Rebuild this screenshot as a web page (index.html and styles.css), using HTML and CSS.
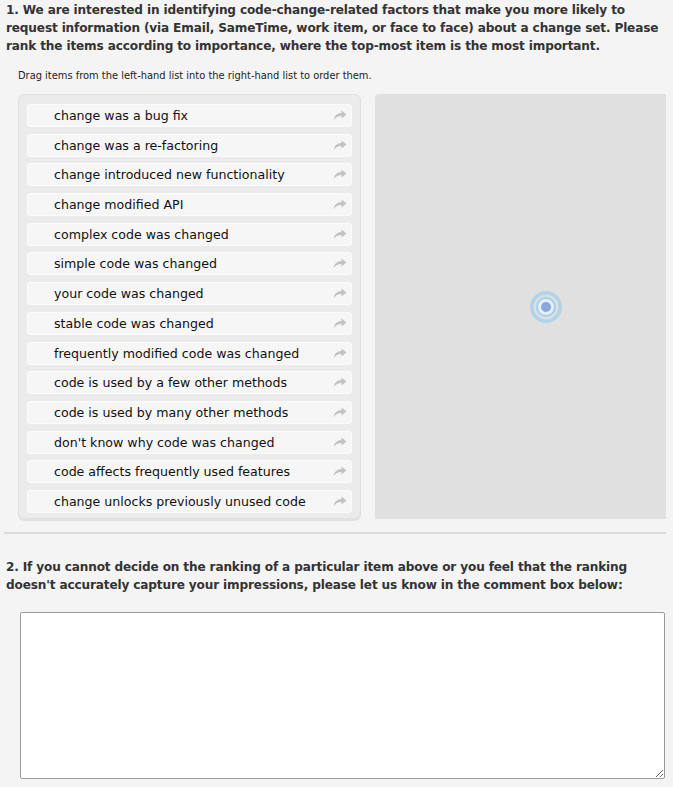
FILE: index.html
```html
<!DOCTYPE html>
<html>
<head>
<meta charset="utf-8">
<link rel="stylesheet" href="styles.css">
</head>
<body>
<div class="page">
  <p class="question">1. We are interested in identifying code-change-related factors that make you more likely to request information (via Email, SameTime, work item, or face to face) about a change set. Please rank the items according to importance, where the top-most item is the most important.</p>
  <p class="hint">Drag items from the left-hand list into the right-hand list to order them.</p>
  <div class="rank">
    <ul class="source">
      <li class="item"><span>change was a bug fix</span><svg class="arrow" viewBox="0 0 14 11"><path d="M8.5 0.5 L13.5 4.5 L8.5 8.5 V6 C5 6 2.5 7 0.8 10.2 C1.2 5.5 4 3.2 8.5 3 Z"/></svg></li>
      <li class="item"><span>change was a re-factoring</span><svg class="arrow" viewBox="0 0 14 11"><path d="M8.5 0.5 L13.5 4.5 L8.5 8.5 V6 C5 6 2.5 7 0.8 10.2 C1.2 5.5 4 3.2 8.5 3 Z"/></svg></li>
      <li class="item"><span>change introduced new functionality</span><svg class="arrow" viewBox="0 0 14 11"><path d="M8.5 0.5 L13.5 4.5 L8.5 8.5 V6 C5 6 2.5 7 0.8 10.2 C1.2 5.5 4 3.2 8.5 3 Z"/></svg></li>
      <li class="item"><span>change modified API</span><svg class="arrow" viewBox="0 0 14 11"><path d="M8.5 0.5 L13.5 4.5 L8.5 8.5 V6 C5 6 2.5 7 0.8 10.2 C1.2 5.5 4 3.2 8.5 3 Z"/></svg></li>
      <li class="item"><span>complex code was changed</span><svg class="arrow" viewBox="0 0 14 11"><path d="M8.5 0.5 L13.5 4.5 L8.5 8.5 V6 C5 6 2.5 7 0.8 10.2 C1.2 5.5 4 3.2 8.5 3 Z"/></svg></li>
      <li class="item"><span>simple code was changed</span><svg class="arrow" viewBox="0 0 14 11"><path d="M8.5 0.5 L13.5 4.5 L8.5 8.5 V6 C5 6 2.5 7 0.8 10.2 C1.2 5.5 4 3.2 8.5 3 Z"/></svg></li>
      <li class="item"><span>your code was changed</span><svg class="arrow" viewBox="0 0 14 11"><path d="M8.5 0.5 L13.5 4.5 L8.5 8.5 V6 C5 6 2.5 7 0.8 10.2 C1.2 5.5 4 3.2 8.5 3 Z"/></svg></li>
      <li class="item"><span>stable code was changed</span><svg class="arrow" viewBox="0 0 14 11"><path d="M8.5 0.5 L13.5 4.5 L8.5 8.5 V6 C5 6 2.5 7 0.8 10.2 C1.2 5.5 4 3.2 8.5 3 Z"/></svg></li>
      <li class="item"><span>frequently modified code was changed</span><svg class="arrow" viewBox="0 0 14 11"><path d="M8.5 0.5 L13.5 4.5 L8.5 8.5 V6 C5 6 2.5 7 0.8 10.2 C1.2 5.5 4 3.2 8.5 3 Z"/></svg></li>
      <li class="item"><span>code is used by a few other methods</span><svg class="arrow" viewBox="0 0 14 11"><path d="M8.5 0.5 L13.5 4.5 L8.5 8.5 V6 C5 6 2.5 7 0.8 10.2 C1.2 5.5 4 3.2 8.5 3 Z"/></svg></li>
      <li class="item"><span>code is used by many other methods</span><svg class="arrow" viewBox="0 0 14 11"><path d="M8.5 0.5 L13.5 4.5 L8.5 8.5 V6 C5 6 2.5 7 0.8 10.2 C1.2 5.5 4 3.2 8.5 3 Z"/></svg></li>
      <li class="item"><span>don't know why code was changed</span><svg class="arrow" viewBox="0 0 14 11"><path d="M8.5 0.5 L13.5 4.5 L8.5 8.5 V6 C5 6 2.5 7 0.8 10.2 C1.2 5.5 4 3.2 8.5 3 Z"/></svg></li>
      <li class="item"><span>code affects frequently used features</span><svg class="arrow" viewBox="0 0 14 11"><path d="M8.5 0.5 L13.5 4.5 L8.5 8.5 V6 C5 6 2.5 7 0.8 10.2 C1.2 5.5 4 3.2 8.5 3 Z"/></svg></li>
      <li class="item"><span>change unlocks previously unused code</span><svg class="arrow" viewBox="0 0 14 11"><path d="M8.5 0.5 L13.5 4.5 L8.5 8.5 V6 C5 6 2.5 7 0.8 10.2 C1.2 5.5 4 3.2 8.5 3 Z"/></svg></li>
    </ul>
    <div class="target">
      <div class="spinner"><div class="ring"><div class="dot"></div></div></div>
    </div>
  </div>
  <hr class="divider">
  <p class="question q2">2. If you cannot decide on the ranking of a particular item above or you feel that the ranking doesn't accurately capture your impressions, please let us know in the comment box below:</p>
  <textarea class="comment"></textarea>
</div>
</body>
</html>
```

FILE: styles.css
```css
html, body {
  margin: 0;
  padding: 0;
  background: #f4f4f4;
}
body {
  font-family: "DejaVu Sans", Verdana, sans-serif;
  color: #222;
}
.page {
  width: 662px;
  padding: 1px 0 0 4px;
}
.question {
  margin: 0;
  padding-left: 2px;
  font-weight: bold;
  font-size: 12.1px;
  line-height: 18px;
  color: #333;
  letter-spacing: -0.15px;
}
.hint {
  margin: 14px 0 0 14px;
  font-size: 9.9px;
  line-height: 14px;
  color: #222;
}
.rank {
  display: flex;
  gap: 14px;
  margin: 11px 0 0 14px;
  height: 425px;
}
.source {
  list-style: none;
  margin: 0;
  box-sizing: border-box;
  padding: 9px 8px 0 8px;
  width: 343px;
  height: 425px;
  background: #ebebeb;
  border: 1px solid #e0e0e0;
  border-radius: 6px;
  box-shadow: 0 2px 0 #e2e2e2;
  display: flex;
  flex-direction: column;
  gap: 6.7px;
}
.item {
  height: 21px;
  background: #f6f6f6;
  border: 1px solid #fbfbfb;
  border-radius: 3px;
  display: flex;
  align-items: center;
  justify-content: space-between;
  padding: 0 4px 0 26px;
  font-size: 12.6px;
  color: #111;
  letter-spacing: 0;
}
.arrow {
  width: 14px;
  height: 11px;
  fill: #c2c2c2;
}
.target {
  flex: 1;
  background: #dfe0df;
  border-radius: 4px 0 0 0;
  display: flex;
  align-items: center;
  justify-content: center;
  padding-left: 51px;
}
.spinner {
  width: 32px;
  height: 32px;
  border-radius: 50%;
  background: radial-gradient(circle, rgba(140,200,240,0.0) 50%, rgba(140,200,240,0.6) 60%, rgba(170,215,245,0.5) 100%);
  display: flex;
  align-items: center;
  justify-content: center;
}
.ring {
  width: 20px;
  height: 20px;
  border-radius: 50%;
  border: 2px solid #9fd0f2;
  box-sizing: border-box;
  display: flex;
  align-items: center;
  justify-content: center;
  background: #e6eef6;
}
.dot {
  width: 10px;
  height: 10px;
  border-radius: 50%;
  background: #8aa8e0;
}
.divider {
  margin: 13px 0 0 0;
  height: 2px;
  border: 0;
  background: #dcdcdc;
}
.q2 {
  margin-top: 24px;
}
.comment {
  display: block;
  margin: 18px 0 0 16px;
  width: 645px;
  height: 167px;
  box-sizing: border-box;
  border: 1px solid #9a9a9a;
  border-radius: 2px;
  background: #fff;
  resize: both;
}
```
